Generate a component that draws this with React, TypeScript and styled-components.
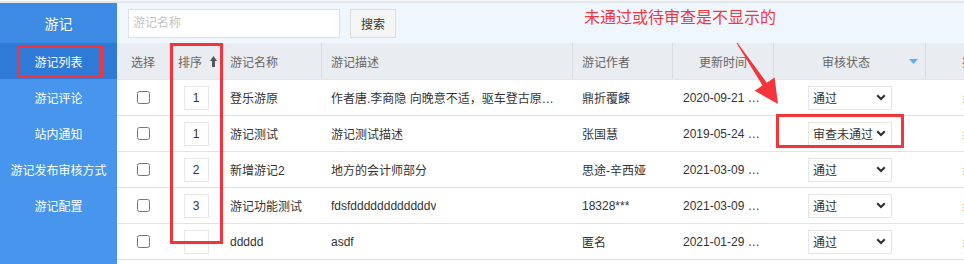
import React from "react";
import styled, { createGlobalStyle } from "styled-components";

const GlobalStyle = createGlobalStyle`
  html, body { margin: 0; padding: 0; background: #fff; overflow: hidden; }
  body {
    font-family: "Liberation Sans", "Noto Sans CJK SC", sans-serif;
    font-size: 12px;
    color: #333;
  }
  * { box-sizing: border-box; }
`;

const Root = styled.div`
  position: relative;
  width: 964px;
  height: 264px;
  overflow: hidden;
  display: flex;
  padding-top: 3px;
  background: linear-gradient(#f6f7f9 0 1px, #e3e7ed 1px 3px);
`;

const Sidebar = styled.nav`
  width: 117px;
  flex: none;
  background: #4795ec;
  display: flex;
  flex-direction: column;
`;

const SideHeader = styled.div`
  height: 40px;
  background: #3c8ae3;
  color: #fff;
  font-size: 14px;
  display: flex;
  align-items: center;
  justify-content: center;
`;

const SideItem = styled.div<{ $active?: boolean }>`
  height: 36px;
  color: #fff;
  font-size: 12px;
  display: flex;
  align-items: center;
  justify-content: center;
  background: ${(p) => (p.$active ? "#2f7ad7" : "transparent")};
`;

const Main = styled.main`
  flex: 1;
  min-width: 0;
  display: flex;
  flex-direction: column;
  overflow: hidden;
`;

const Toolbar = styled.div`
  height: 40px;
  flex: none;
  background: #eff6fe;
  display: flex;
  align-items: center;
  gap: 10px;
  padding-left: 11px;
`;

const SearchInput = styled.input`
  width: 212px;
  height: 29px;
  border: 1px solid #e1e1e1;
  background: #fff;
  padding: 0 4px;
  font: inherit;
  font-size: 12px;
  outline: none;
  &::placeholder { color: #c4c4c4; }
`;

const SearchButton = styled.button`
  width: 46px;
  height: 29px;
  border: 1px solid #dcdcdc;
  background: #f5f5f5;
  font: inherit;
  font-size: 12px;
  color: #333;
  padding: 0;
`;

const Note = styled.span`
  align-self: flex-start;
  margin-top: 6px;
  margin-left: 178px;
  font-size: 16px;
  line-height: 18px;
  color: #f4363e;
  white-space: nowrap;
`;

const COLS = "53px 52px 100px 251px 100px 101px 152px 140px";

const HeadRow = styled.div`
  display: grid;
  grid-template-columns: ${COLS};
  height: 37px;
  background: #e9ecf1;
  border-bottom: 1px solid #e6e6e6;
  color: #666;
  font-size: 12px;
  flex: none;
`;

const HeadCell = styled.div<{ $align?: "left" | "center"; $pad?: number }>`
  display: flex;
  align-items: center;
  gap: 8px;
  justify-content: ${(p) => (p.$align === "center" ? "center" : "flex-start")};
  padding-left: ${(p) => p.$pad ?? 9}px;
  border-right: 1px solid #d9dee6;
  white-space: nowrap;
  overflow: hidden;
`;

const FilterHeadCell = styled.div`
  display: grid;
  grid-template-columns: 1fr auto 1fr;
  align-items: center;
  border-right: 1px solid #d9dee6;
  padding-right: 7px;
  & > span { grid-column: 2; }
  & > svg { grid-column: 3; justify-self: end; }
`;

const Row = styled.div`
  display: grid;
  grid-template-columns: ${COLS};
  height: 36px;
  border-bottom: 1px solid #e3e3e3;
  background: #fff;
  flex: none;
`;

const Cell = styled.div<{ $center?: boolean; $pad?: number }>`
  display: flex;
  align-items: center;
  justify-content: ${(p) => (p.$center ? "center" : "flex-start")};
  padding: 0 ${(p) => p.$pad ?? 9}px;
  min-width: 0;
  overflow: hidden;
`;

const Text = styled.span`
  display: block;
  white-space: nowrap;
  overflow: hidden;
  text-overflow: ellipsis;
  color: #333;
  min-width: 0;
`;

const Check = styled.input`
  margin: 0;
  width: 13px;
  height: 13px;
`;

const OrderInput = styled.input`
  width: 25px;
  height: 24px;
  border: 1px solid #e8e8e8;
  text-align: center;
  font: inherit;
  font-size: 12px;
  color: #333;
  padding: 0;
  outline: none;
  background: #fff;
`;

const SelectBox = styled.div`
  width: 84px;
  height: 24px;
  border: 1px solid #e6e6e6;
  display: flex;
  align-items: center;
  justify-content: space-between;
  padding: 0 5px 0 4px;
  color: #333;
  font-size: 12px;
  background: #fff;
`;

const Filler = styled.div`
  flex: 1;
  background: #fff;
`;

const Mark = styled.div<{ $l: number; $t: number; $w: number; $h: number }>`
  position: absolute;
  left: ${(p) => p.$l}px;
  top: ${(p) => p.$t}px;
  width: ${(p) => p.$w}px;
  height: ${(p) => p.$h}px;
  border: 3px solid #f5333b;
  pointer-events: none;
`;

const ArrowLayer = styled.svg`
  position: absolute;
  left: 0;
  top: 0;
  pointer-events: none;
`;

const SortIcon = () => (
  <svg width="7" height="11" viewBox="0 0 7 11">
    <polygon points="3.5,0 7,5 5,5 5,11 2,11 2,5 0,5" fill="#555" />
  </svg>
);

const FilterIcon = () => (
  <svg width="9" height="5" viewBox="0 0 9 5">
    <polygon points="0,0 9,0 4.5,5" fill="#5db2f6" />
  </svg>
);

const Chevron = () => (
  <svg width="10" height="7" viewBox="0 0 10 7">
    <path d="M1.2 1.3 L5 5 L8.8 1.3" fill="none" stroke="#333" strokeWidth="2.2" />
  </svg>
);

type Item = {
  order: string;
  name: string;
  desc: string;
  author: string;
  time: string;
  status: string;
};

const rows: Item[] = [
  {
    order: "1",
    name: "登乐游原",
    desc: "作者唐.李商隐 向晚意不适，驱车登古原。夕阳无限好，只是近黄昏。",
    author: "鼎折覆餗",
    time: "2020-09-21 10:23:45",
    status: "通过",
  },
  {
    order: "1",
    name: "游记测试",
    desc: "游记测试描述",
    author: "张国慧",
    time: "2019-05-24 16:02:11",
    status: "审查未通过",
  },
  {
    order: "2",
    name: "新增游记2",
    desc: "地方的会计师部分",
    author: "思途-辛西娅",
    time: "2021-03-09 14:30:12",
    status: "通过",
  },
  {
    order: "3",
    name: "游记功能测试",
    desc: "fdsfddddddddddddv",
    author: "18328***",
    time: "2021-03-09 15:12:40",
    status: "通过",
  },
  {
    order: "",
    name: "ddddd",
    desc: "asdf",
    author: "匿名",
    time: "2021-01-29 09:41:05",
    status: "通过",
  },
];

const menu = ["游记列表", "游记评论", "站内通知", "游记发布审核方式", "游记配置"];

export default function App() {
  return (
    <>
      <GlobalStyle />
      <Root>
        <Sidebar>
          <SideHeader>游记</SideHeader>
          {menu.map((m, i) => (
            <SideItem key={m} $active={i === 0}>
              {m}
            </SideItem>
          ))}
        </Sidebar>
        <Main>
          <Toolbar>
            <SearchInput placeholder="游记名称" />
            <SearchButton>搜索</SearchButton>
            <Note>未通过或待审查是不显示的</Note>
          </Toolbar>
          <HeadRow>
            <HeadCell $align="center" $pad={0}>选择</HeadCell>
            <HeadCell $pad={8}>
              排序
              <SortIcon />
            </HeadCell>
            <HeadCell $pad={8}>游记名称</HeadCell>
            <HeadCell>游记描述</HeadCell>
            <HeadCell>游记作者</HeadCell>
            <HeadCell $align="center" $pad={0}>更新时间</HeadCell>
            <FilterHeadCell>
              <span>审核状态</span>
              <FilterIcon />
            </FilterHeadCell>
            <HeadCell $pad={36}>操作</HeadCell>
          </HeadRow>
          {rows.map((r, i) => (
            <Row key={i}>
              <Cell $center $pad={0}>
                <Check type="checkbox" />
              </Cell>
              <Cell $center $pad={0}>
                <OrderInput readOnly value={r.order} />
              </Cell>
              <Cell $pad={8}>
                <Text>{r.name}</Text>
              </Cell>
              <Cell>
                <Text>{r.desc}</Text>
              </Cell>
              <Cell>
                <Text>{r.author}</Text>
              </Cell>
              <Cell $pad={10}>
                <Text>{r.time}</Text>
              </Cell>
              <Cell $center $pad={0}>
                <SelectBox>
                  <span>{r.status}</span>
                  <Chevron />
                </SelectBox>
              </Cell>
              <Cell $pad={37}>
                <Text>编辑</Text>
              </Cell>
            </Row>
          ))}
          <Filler />
        </Main>
        <Mark $l={17} $t={45} $w={86} $h={33} />
        <Mark $l={170} $t={43} $w={53} $h={201} />
        <Mark $l={776} $t={114} $w={128} $h={34} />
        <ArrowLayer width="964" height="264" viewBox="0 0 964 264">
          <polygon
            points="736.6,43.3 737.4,42.7 766.7,82.7 774.6,77.4 778,104 754.6,90.8 762.5,85.5"
            fill="#f5333b"
          />
        </ArrowLayer>
      </Root>
    </>
  );
}
